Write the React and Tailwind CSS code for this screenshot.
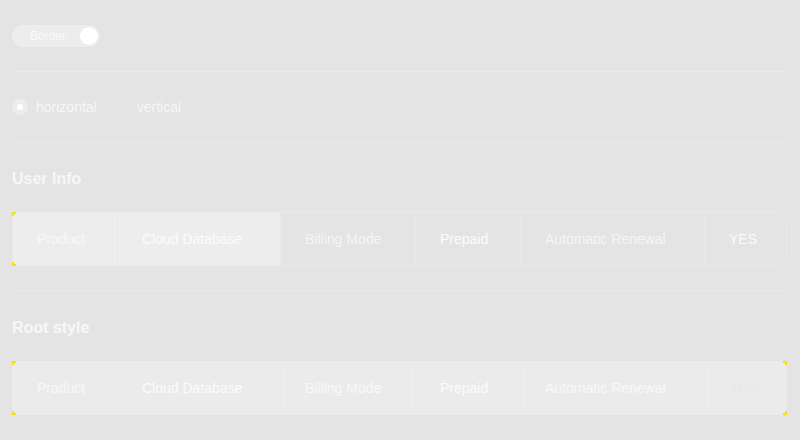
import React from 'react';

const rows = [
  { label: 'Product', value: 'Cloud Database' },
  { label: 'Billing Mode', value: 'Prepaid' },
  { label: 'Automatic Renewal', value: 'YES' },
];

const widths = ['w-[105px]', 'w-[163px]', 'w-[135px]', 'w-[105px]', 'w-[184px]', 'flex-1'];

const Corner = ({ pos }) => {
  const base = 'absolute w-[4px] h-[4px] ';
  const map = {
    tl: '-top-px -left-px border-t-2 border-l-2',
    bl: '-bottom-px -left-px border-b-2 border-l-2',
    tr: '-top-px -right-px border-t-2 border-r-2',
    br: '-bottom-px -right-px border-b-2 border-r-2',
  };
  return <span className={base + map[pos] + ' border-[#f5e600]'} />;
};

const Descriptions = ({ variant }) => {
  const cells = rows.flatMap((r) => [
    { text: r.label, kind: 'label' },
    { text: r.value, kind: 'value' },
  ]);
  const root = variant === 'root';
  return (
    <div
      className={`relative flex h-[54px] w-[775px] border ${
        root ? 'bg-[#ebebeb] border-[#ebebeb]' : 'border-[#e9e9e9] rounded-r-lg'
      }`}
    >
      {cells.map((c, i) => {
        const first = i < 2 && !root;
        const last = i === cells.length - 1;
        let color = c.kind === 'label' ? 'text-[#f5f5f5]' : 'text-[#fbfbfb]';
        if (c.kind === 'label' && (first || root)) color = 'text-[#f8f8f8]';
        if (root && last) color = 'text-[#e8e8e8]';
        return (
          <div
            key={i}
            className={`${widths[i]} flex items-center pl-[24px] text-[14px] ${color} ${
              i < cells.length - 1 ? 'border-r border-[#e8e8e8]' : ''
            } ${first ? 'bg-[#ededed]' : ''}`}
          >
            {c.text}
          </div>
        );
      })}
      <Corner pos="tl" />
      <Corner pos="bl" />
      {root && <Corner pos="tr" />}
      {root && <Corner pos="br" />}
    </div>
  );
};

const Radio = ({ checked, label }) => (
  <label className="flex items-center gap-2">
    <span
      className={`w-4 h-4 rounded-full flex items-center justify-center ${
        checked ? 'bg-[#ededed]' : 'border border-[#e9e9e9]'
      }`}
    >
      {checked && <span className="w-[6px] h-[6px] rounded-full bg-white" />}
    </span>
    <span className="text-[14px] text-[#f7f7f7]">{label}</span>
  </label>
);

export default function App() {
  return (
    <div
      className="w-[800px] h-[440px] bg-[#e4e4e4] px-3 overflow-hidden"
      style={{ fontFamily: '"Liberation Sans", Arial, sans-serif' }}
    >
      <div className="pt-[25px]">
        <div className="w-[88px] h-[22px] rounded-full bg-[#ededed] flex items-center justify-between pl-[18px] pr-[2px]">
          <span className="text-[12px] text-[#f8f8f8]">Border</span>
          <span className="w-[18px] h-[18px] rounded-full bg-white" />
        </div>
      </div>
      <div className="w-[775px] border-t border-[#e9e9e9] mt-[24px]" />
      <div className="flex items-center gap-4 h-[70px]">
        <Radio checked label="horizontal" />
        <Radio label="vertical" />
      </div>
      <div className="w-[775px] border-t border-[#e9e9e9]" />

      <div className="pt-[26px] text-[16px] font-bold text-[#f7f7f7] leading-[20px]">User Info</div>
      <div className="mt-[23px]">
        <Descriptions />
      </div>
      <div className="w-[775px] border-t border-[#e9e9e9] mt-[24px]" />

      <div className="pt-[27px] text-[16px] font-bold text-[#f7f7f7] leading-[20px]">Root style</div>
      <div className="mt-[23px]">
        <Descriptions variant="root" />
      </div>
    </div>
  );
}
